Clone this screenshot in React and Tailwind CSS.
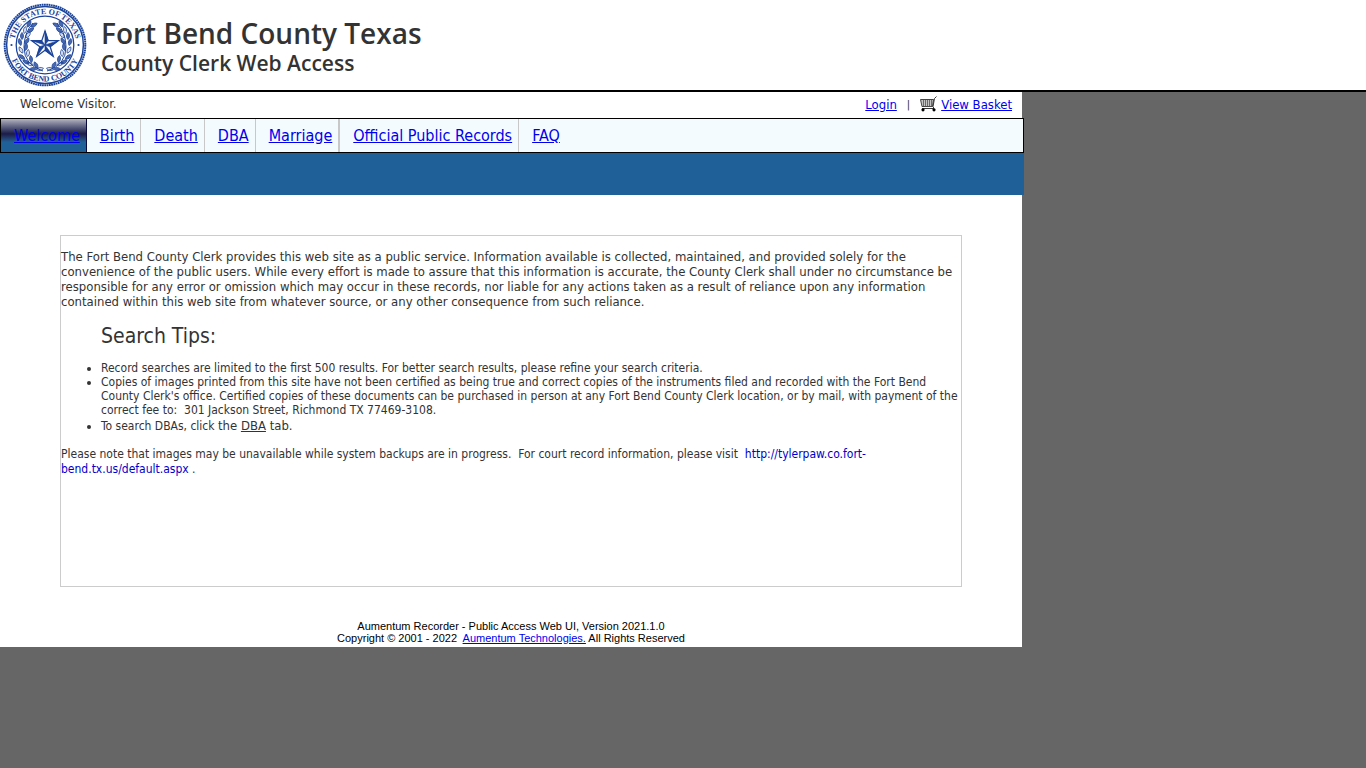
import clsx from "clsx";

const TABS = ["Welcome", "Birth", "Death", "DBA", "Marriage", "Official Public Records", "FAQ"];

const STAR = "0,-17 3.9,-5.3 16.2,-5.3 6.3,2 10,13.8 0,6.5 -10,13.8 -6.3,2 -16.2,-5.3 -3.9,-5.3";

// one side of the wreath: [x, y, angle] for each leaf
const LEAVES = [
  [5, 24, 10], [9, 20, -60], [12, 24, 0], [15, 19, -20], [14, 14, -80],
  [19, 17, -30], [17, 8, -95], [23, 12, -40], [19, 2, -100], [24, 5, -60],
  [18, -4, -120], [25, -3, -75], [17, -10, -130], [23, -9, -90], [14, -15, -140],
  [20, -15, -100], [11, -20, -150], [16, -21, -120],
];

function Seal() {
  return (
    <svg viewBox="0 0 84 84" className="size-21 shrink-0" role="img" aria-label="State of Texas, Fort Bend County seal">
      <defs>
        <path id="seal-top" d="M 11 42 A 31 31 0 0 1 73 42" />
        <path id="seal-bottom" d="M 5.5 42 A 36.5 36.5 0 0 0 78.5 42" />
      </defs>
      <g fill="none" stroke="#1c449b">
        <circle cx="42" cy="42" r="40.3" strokeWidth="2" strokeDasharray="1.8 0.5" />
        <circle cx="42" cy="42" r="38.4" strokeWidth="1.5" />
        <circle cx="42" cy="42" r="28.8" strokeWidth="1.3" />
      </g>
      <g fill="#1c449b" className="font-['Liberation_Serif',serif] text-[8px] font-bold">
        <text textAnchor="middle"><textPath href="#seal-top" startOffset="50%">THE STATE OF TEXAS</textPath></text>
        <text textAnchor="middle"><textPath href="#seal-bottom" startOffset="50%">FORT BEND COUNTY</textPath></text>
        <circle cx="8.5" cy="42" r="1.1" />
        <circle cx="75.5" cy="42" r="1.1" />
      </g>
      {[1, -1].map((side) => (
        <g key={side} transform={`translate(42 42) scale(${side} 1)`} stroke="#1c449b" fill="#1c449b">
          <path d="M2 26 Q21 20 21 2 Q21 -12 12 -22" fill="none" strokeWidth="1" />
          {LEAVES.map(([x, y, a], i) => (
            <path
              key={i}
              d="M-3.6 0 Q0 -3.2 3.6 0 Q0 3.2 -3.6 0Z"
              transform={`translate(${x} ${y}) rotate(${a})`}
              strokeWidth="0.7"
              fillOpacity={i % 3 ? 0.8 : 0.2}
            />
          ))}
        </g>
      ))}
      <g transform="translate(42 42) scale(0.82)" stroke="#1c449b">
        <polygon points={STAR} fill="#fff" strokeWidth="1.6" />
        <path
          d="M0 0 0-17 3.9-5.3Z M0 0 16.2-5.3 6.3 2Z M0 0 10 13.8 0 6.5Z M0 0-10 13.8-6.3 2Z M0 0-16.2-5.3-3.9-5.3Z"
          fill="#1c449b"
          strokeWidth="0.8"
        />
      </g>
    </svg>
  );
}

function Cart() {
  return (
    <svg viewBox="0 0 17 16" className="h-4 w-[17px]" aria-hidden="true">
      <path d="M0.5 3.5H13.5L12.5 10.5H2Z" fill="#c4c4c4" stroke="#333" strokeWidth="0.9" />
      <path d="M3.5 4V10 M5.5 4V10 M7.5 4V10 M9.5 4V10 M11.5 4V10" stroke="#444" strokeWidth="0.7" fill="none" />
      <path d="M16.5 0.5 14.5 2.5 13 10.5 14 12.5H2" stroke="#222" strokeWidth="0.9" fill="none" />
      <circle cx="3" cy="13.8" r="1.6" fill="#000" />
      <circle cx="14" cy="13.8" r="1.6" fill="#000" />
    </svg>
  );
}

function Tab({ label, active }) {
  return (
    <li
      className={clsx(
        "flex items-center pr-1.5 pl-[13px]",
        active && "border-r border-[#0a0a3c] bg-linear-to-b from-[#b4b4c0] via-[#1c1c48] via-45% to-[#206098] to-70%",
        !active && label !== "FAQ" && "border-[#c8c8c8]",
        !active && label !== "FAQ" && (label === "Marriage" ? "border-r-2" : "border-r"),
      )}
    >
      <a href="#" className="text-[16px] leading-5 text-[#0000ee] underline">{label}</a>
    </li>
  );
}

export default function App() {
  return (
    <div className="min-h-screen bg-[#666] font-['DejaVu_Sans_Condensed','DejaVu_Sans',sans-serif] text-[13px] leading-[15px] text-[#333]">
      <header className="flex h-[92px] items-center gap-3 border-b-2 border-black bg-white pl-[3px] font-['Open_Sans',sans-serif] font-semibold">
        <Seal />
        <div className="pt-1 pl-0.5">
          <h1 className="text-[28px] leading-8">Fort Bend County Texas</h1>
          <h2 className="text-[21px] leading-7">County Clerk Web Access</h2>
        </div>
      </header>

      <div className="w-full max-w-[1024px]">
        <div className="mr-0.5 flex h-[26px] items-center justify-between bg-white pr-2.5 pb-0.5 pl-5">
          <span className="pb-0.5">Welcome Visitor.</span>
          <div className="flex items-center">
            <a href="#" className="text-[#0000ee] underline">Login</a>
            <span className="px-2.5 text-[11px]">|</span>
            <a href="#" className="flex items-center gap-1 text-[#0000ee] underline"><Cart />View Basket</a>
          </div>
        </div>

        <nav className="border border-black bg-[#f4fbff]">
          <ul className="flex h-[33px]">
            {TABS.map((t, i) => <Tab key={t} label={t} active={i === 0} />)}
          </ul>
        </nav>
        <div className="h-[42px] bg-[#206098]" />

        <div className="mr-0.5 bg-white pt-10 pb-[3px]">
          <main className="mx-[60px] min-h-[352px] border border-[#ccc] pt-[13px]">
            <p>
              The Fort Bend County Clerk provides this web site as a public service. Information available is collected, maintained, and provided solely for the convenience of the public users. While every effort is made to assure that this information is accurate, the County Clerk shall under no circumstance be responsible for any error or omission which may occur in these records, nor liable for any actions taken as a result of reliance upon any information contained within this web site from whatever source, or any other consequence from such reliance.
            </p>
            <h3 className="mt-[13px] pl-10 text-[21px] leading-7">Search Tips:</h3>
            <ul className="mt-[11px] list-disc pl-10 text-[12px] leading-[14px]">
              <li>Record searches are limited to the first 500 results. For better search results, please refine your search criteria.</li>
              <li>
                Copies of images printed from this site have not been certified as being true and correct copies of the instruments filed and recorded with the Fort Bend County Clerk's office. Certified copies of these documents can be purchased in person at any Fort Bend County Clerk location, or by mail, with payment of the correct fee to:&nbsp; 301 Jackson Street, Richmond TX 77469-3108.
              </li>
              <li className="leading-[18px]">
                To search DBAs, click <span className="text-[13px]">the <a href="#" className="underline">DBA</a> tab.</span>
              </li>
            </ul>
            <p className="mt-3 text-[12px]">
              Please note that images may be unavailable while system backups are in progress.&nbsp; For court record information, please visit&nbsp; <a href="#" className="text-[#0000cc]">http://tylerpaw.co.fort-bend.tx.us/default.aspx</a> .
            </p>
          </main>

          <footer className="pt-[33px] text-center font-['Liberation_Sans',Arial,sans-serif] text-[11px] leading-3 text-black">
            <p>Aumentum Recorder - Public Access Web UI, Version 2021.1.0</p>
            <p>Copyright © 2001 - 2022&nbsp; <a href="#" className="text-[#0000ee] underline">Aumentum Technologies.</a> All Rights Reserved</p>
          </footer>
        </div>
      </div>
    </div>
  );
}
